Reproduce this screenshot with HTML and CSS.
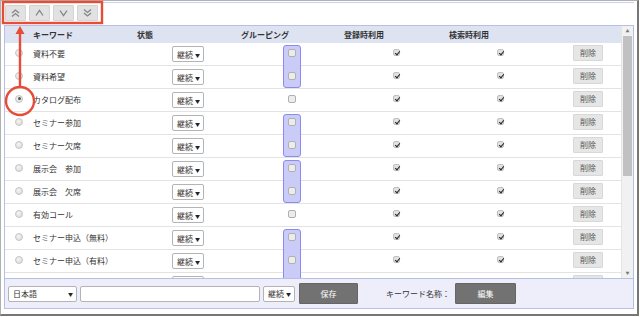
FILE: index.html
```html
<!DOCTYPE html>
<html lang="ja">
<head>
    <meta charset="UTF-8">
    <title>キーワード設定</title>
    <link rel="stylesheet" href="styles.css">
</head>
<body>
    <div class="window">
        <div class="toolbar">
            <button class="move" title="先頭へ">
                <svg width="9" height="8" viewBox="0 0 9 8"><polyline points="1,4 4.5,1 8,4"/><polyline points="1,7.5 4.5,4.5 8,7.5"/></svg>
            </button>
            <button class="move" title="上へ">
                <svg width="9" height="8" viewBox="0 0 9 8"><polyline points="1,6.5 4.5,1.5 8,6.5"/></svg>
            </button>
            <button class="move" title="下へ">
                <svg width="9" height="8" viewBox="0 0 9 8"><polyline points="1,1.5 4.5,6.5 8,1.5"/></svg>
            </button>
            <button class="move" title="末尾へ">
                <svg width="9" height="8" viewBox="0 0 9 8"><polyline points="1,0.5 4.5,3.5 8,0.5"/><polyline points="1,4 4.5,7 8,4"/></svg>
            </button>
        </div>

        <div class="panel">
            <div class="list-area">
                <div class="list">
                    <div class="head">
                        <span></span>
                        <span>キーワード</span>
                        <span>状態</span>
                        <span>グルーピング</span>
                        <span>登録時利用</span>
                        <span>検索時利用</span>
                    </div>
                    <div class="rows">
                        <div class="row">
                            <span class="cell"><span class="radio"></span></span>
                            <span class="name">資料不要</span>
                            <span class="cell-l"><span class="sel">継続<i>▼</i></span></span>
                            <span class="cell grp"><span class="gbox"></span><span class="cb"></span></span>
                            <span class="cell"><span class="cb on"></span></span>
                            <span class="cell"><span class="cb on"></span></span>
                            <span class="cell-l del-cell"><button class="del">削除</button></span>
                        </div>
                        <div class="row">
                            <span class="cell"><span class="radio"></span></span>
                            <span class="name">資料希望</span>
                            <span class="cell-l"><span class="sel">継続<i>▼</i></span></span>
                            <span class="cell grp"><span class="cb"></span></span>
                            <span class="cell"><span class="cb on"></span></span>
                            <span class="cell"><span class="cb on"></span></span>
                            <span class="cell-l del-cell"><button class="del">削除</button></span>
                        </div>
                        <div class="row">
                            <span class="cell"><span class="radio checked"></span></span>
                            <span class="name">カタログ配布</span>
                            <span class="cell-l"><span class="sel">継続<i>▼</i></span></span>
                            <span class="cell grp"><span class="cb"></span></span>
                            <span class="cell"><span class="cb on"></span></span>
                            <span class="cell"><span class="cb on"></span></span>
                            <span class="cell-l del-cell"><button class="del">削除</button></span>
                        </div>
                        <div class="row">
                            <span class="cell"><span class="radio"></span></span>
                            <span class="name">セミナー参加</span>
                            <span class="cell-l"><span class="sel">継続<i>▼</i></span></span>
                            <span class="cell grp"><span class="gbox"></span><span class="cb"></span></span>
                            <span class="cell"><span class="cb on"></span></span>
                            <span class="cell"><span class="cb on"></span></span>
                            <span class="cell-l del-cell"><button class="del">削除</button></span>
                        </div>
                        <div class="row">
                            <span class="cell"><span class="radio"></span></span>
                            <span class="name">セミナー欠席</span>
                            <span class="cell-l"><span class="sel">継続<i>▼</i></span></span>
                            <span class="cell grp"><span class="cb"></span></span>
                            <span class="cell"><span class="cb on"></span></span>
                            <span class="cell"><span class="cb on"></span></span>
                            <span class="cell-l del-cell"><button class="del">削除</button></span>
                        </div>
                        <div class="row">
                            <span class="cell"><span class="radio"></span></span>
                            <span class="name">展示会　参加</span>
                            <span class="cell-l"><span class="sel">継続<i>▼</i></span></span>
                            <span class="cell grp"><span class="gbox"></span><span class="cb"></span></span>
                            <span class="cell"><span class="cb on"></span></span>
                            <span class="cell"><span class="cb on"></span></span>
                            <span class="cell-l del-cell"><button class="del">削除</button></span>
                        </div>
                        <div class="row">
                            <span class="cell"><span class="radio"></span></span>
                            <span class="name">展示会　欠席</span>
                            <span class="cell-l"><span class="sel">継続<i>▼</i></span></span>
                            <span class="cell grp"><span class="cb"></span></span>
                            <span class="cell"><span class="cb on"></span></span>
                            <span class="cell"><span class="cb on"></span></span>
                            <span class="cell-l del-cell"><button class="del">削除</button></span>
                        </div>
                        <div class="row">
                            <span class="cell"><span class="radio"></span></span>
                            <span class="name">有効コール</span>
                            <span class="cell-l"><span class="sel">継続<i>▼</i></span></span>
                            <span class="cell grp"><span class="cb"></span></span>
                            <span class="cell"><span class="cb on"></span></span>
                            <span class="cell"><span class="cb on"></span></span>
                            <span class="cell-l del-cell"><button class="del">削除</button></span>
                        </div>
                        <div class="row">
                            <span class="cell"><span class="radio"></span></span>
                            <span class="name">セミナー申込（無料）</span>
                            <span class="cell-l"><span class="sel">継続<i>▼</i></span></span>
                            <span class="cell grp"><span class="gbox tall"></span><span class="cb"></span></span>
                            <span class="cell"><span class="cb on"></span></span>
                            <span class="cell"><span class="cb on"></span></span>
                            <span class="cell-l del-cell"><button class="del">削除</button></span>
                        </div>
                        <div class="row">
                            <span class="cell"><span class="radio"></span></span>
                            <span class="name">セミナー申込（有料）</span>
                            <span class="cell-l"><span class="sel">継続<i>▼</i></span></span>
                            <span class="cell grp"><span class="cb"></span></span>
                            <span class="cell"><span class="cb on"></span></span>
                            <span class="cell"><span class="cb on"></span></span>
                            <span class="cell-l del-cell"><button class="del">削除</button></span>
                        </div>
                        <!-- next row only shows the top edge of its controls -->
                        <div class="row">
                            <span class="cell"></span>
                            <span class="name"></span>
                            <span class="cell-l"><span class="sel"></span></span>
                            <span class="cell grp"></span>
                            <span class="cell"></span>
                            <span class="cell"></span>
                            <span class="cell-l del-cell"><span class="del"></span></span>
                        </div>
                    </div>
                </div>
                <div class="scrollbar">
                    <span class="arrow">▲</span>
                    <span class="track"><span class="thumb"></span></span>
                    <span class="arrow">▼</span>
                </div>
            </div>

            <div class="footer">
                <span class="sel lang">日本語<i>▼</i></span>
                <span class="text-input"></span>
                <span class="sel">継続<i>▼</i></span>
                <button class="dark save">保存</button>
                <span class="label">キーワード名称：</span>
                <button class="dark edit">編集</button>
            </div>
        </div>

        <!-- annotation marks drawn over the screen -->
        <svg class="marks" width="640" height="317" viewBox="0 0 640 317">
            <rect x="3" y="2" width="99" height="21"/>
            <line x1="20" y1="32" x2="20" y2="87"/>
            <polygon points="20,26 15.5,34 24.5,34"/>
            <circle cx="20" cy="101" r="14"/>
        </svg>
    </div>
</body>
</html>
```

FILE: styles.css
```css
* {
    box-sizing: border-box;
    margin: 0;
    padding: 0;
}

body {
    font-family: "Noto Sans CJK JP", "Noto Sans", sans-serif;
    font-size: 8px;
    color: #333;
    background: white;
}

.window {
    position: relative;
    width: 639px;
    height: 316px;
    border: 1px solid #b0b0b0;
    border-right: 2px solid #777;
    border-bottom: 2px solid #777;
    padding: 1px 3px 5px 3px;
}

.toolbar {
    height: 23px;
    border-top: 1px solid #c8d0ee;
    display: flex;
    gap: 3px;
    padding: 2px 0 0 1px;
}

button {
    font-family: inherit;
    font-size: 8px;
    border: none;
    cursor: pointer;
}

.move {
    width: 21px;
    height: 16px;
    background: #e2e2e2;
    border: 1px solid #d4d4d4;
    border-radius: 1px;
    display: flex;
    align-items: center;
    justify-content: center;
}

.move svg polyline {
    fill: none;
    stroke: #858585;
    stroke-width: 1.3;
}

.panel {
    width: 630px;
    height: 284px;
    border: 1px solid #b7bfe6;
    display: flex;
    flex-direction: column;
}

.list-area {
    display: flex;
    height: 252px;
}

.list {
    flex: 1;
    display: flex;
    flex-direction: column;
}

.head {
    height: 17px;
    background: #dde3f1;
    display: grid;
    grid-template-columns: 28px 104px 104px 103px 105px 1fr;
    align-items: center;
    font-weight: bold;
}

.rows {
    height: 235px;
    overflow: hidden;
}

.row {
    height: 23px;
    border-bottom: 1px solid #e3e3e3;
    display: grid;
    grid-template-columns: 28px 139px 103px 32px 178px 30px 1fr;
    align-items: center;
}

.cell {
    display: flex;
    justify-content: center;
    align-items: center;
    height: 100%;
}

.cell-l {
    display: flex;
    align-items: center;
    height: 100%;
}

.del-cell {
    padding-left: 58px;
}

.name {
    white-space: nowrap;
    margin-top: -2px;
}

.radio {
    width: 8px;
    height: 8px;
    border-radius: 50%;
    border: 1px solid #c4c4c4;
    background: radial-gradient(circle at 40% 35%, #f4f4f4, #d8d8d8);
    margin-top: -3px;
    display: flex;
    align-items: center;
    justify-content: center;
}

.radio.checked::after {
    content: "";
    width: 3px;
    height: 3px;
    border-radius: 50%;
    background: #555;
}

.sel {
    height: 16px;
    border: 1px solid #b4b4b4;
    border-radius: 2px;
    background: white;
    display: inline-flex;
    align-items: center;
    padding: 0 3px 0 4px;
    width: 32px;
    justify-content: space-between;
    white-space: nowrap;
}

.sel i {
    font-style: normal;
    font-size: 5px;
    color: #222;
}

.grp {
    position: relative;
}

.gbox {
    position: absolute;
    left: 8px;
    top: 2px;
    width: 18px;
    height: 43px;
    border: 1.5px solid #8a8af2;
    border-radius: 3px;
    background: #cbcbf7;
    z-index: 1;
}

.gbox.tall {
    height: 80px;
}

.cb {
    position: relative;
    z-index: 2;
    width: 8px;
    height: 8px;
    border: 1px solid #b0b0b0;
    border-radius: 2px;
    background: #ececec;
    margin-left: 1px;
    margin-top: -2px;
}

.cb.on {
    width: 7px;
    height: 7px;
    background: #e2e2e2;
    border-color: #c0c0c0;
    margin-top: -4px;
    margin-left: 0;
}

.cb.on::after {
    content: "";
    position: absolute;
    left: 2px;
    top: 0;
    width: 2px;
    height: 4px;
    border-right: 1.3px solid #222;
    border-bottom: 1.3px solid #222;
    transform: rotate(40deg);
}

.del {
    display: inline-block;
    width: 30px;
    height: 16px;
    background: #e6e6e6;
    border: 1px solid #d8d8d8;
    border-radius: 1px;
    color: #555;
    margin-top: -3px;
}

.scrollbar {
    width: 12px;
    background: #f1f1f1;
    border-left: 1px solid #e4e4e4;
    display: flex;
    flex-direction: column;
}

.arrow {
    height: 10px;
    font-size: 4px;
    color: #777;
    display: flex;
    align-items: center;
    justify-content: center;
}

.track {
    flex: 1;
    padding: 0 1px;
}

.thumb {
    display: block;
    height: 140px;
    background: #c1c1c1;
}

.footer {
    flex: 1;
    border-top: 1px solid #b7bfe6;
    background: #eeeefb;
    display: flex;
    align-items: center;
    gap: 3px;
    padding: 0 0 0 3px;
}

.footer .sel {
    height: 16px;
}

.footer .lang {
    width: 69px;
    color: #333;
}

.text-input {
    width: 180px;
    height: 16px;
    background: white;
    border: 1px solid #b4b4b4;
    border-radius: 2px;
}

.dark {
    height: 21px;
    background: #727272;
    color: white;
    border: 1px solid #666;
    border-radius: 1px;
}

.save {
    width: 59px;
    margin-left: 1px;
}

.label {
    margin-left: 25px;
    white-space: nowrap;
}

.edit {
    width: 61px;
    margin-left: 2px;
}

.marks {
    position: absolute;
    left: -1px;
    top: -1px;
    pointer-events: none;
}

.marks rect,
.marks line,
.marks circle {
    fill: none;
    stroke: #e84c37;
    stroke-width: 2.4;
}

.marks polygon {
    fill: #e84c37;
}
```
